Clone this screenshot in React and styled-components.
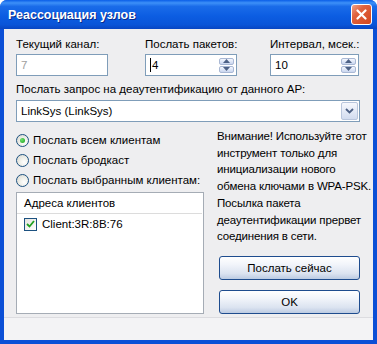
import styled, { createGlobalStyle } from "styled-components";

const Global = createGlobalStyle`
  html, body { margin: 0; padding: 0; background: #ffffff; }
  body { font-family: "Liberation Sans", Arial, sans-serif; font-size: 11.5px; color: #000; }
`;

const Window = styled.div`
  width: 377px;
  height: 344px;
  display: flex;
  flex-direction: column;
  border-radius: 7px 7px 0 0;
  overflow: hidden;
  background: #0b4fd6;
`;

const TitleBar = styled.div`
  height: 29px;
  flex-shrink: 0;
  display: flex;
  align-items: center;
  justify-content: space-between;
  padding: 0 5px 0 8px;
  background: linear-gradient(#0a5ee8 0%, #3d90f8 10%, #1a6ce9 22%, #0c5de2 55%, #0a55d8 85%, #0846c2 100%);
`;

const Title = styled.span`
  color: #fff;
  font-weight: bold;
  font-size: 12.5px;
  text-shadow: 1px 1px 0 #0a2a8a;
`;

const CloseButton = styled.div`
  width: 19px;
  height: 19px;
  border: 1px solid #fff;
  border-radius: 3px;
  background: linear-gradient(135deg, #f0a38a 0%, #e0623e 35%, #d4471f 100%);
  display: flex;
  align-items: center;
  justify-content: center;
`;

const Frame = styled.div`
  flex: 1;
  display: flex;
  flex-direction: column;
  border: solid #0b4fd6;
  border-width: 0 4px 4px;
  background: #eeeef0;
`;

const Body = styled.div`
  flex: 1;
  display: flex;
  flex-direction: column;
  padding: 8px 13px 2px 12px;
`;

const Footer = styled.div`
  height: 22px;
  border-top: 1px solid #dcdce0;
  background: #f3f3f5;
`;

const TopRow = styled.div`
  display: grid;
  grid-template-columns: 129px 125px 1fr;
`;

const Field = styled.div`
  display: flex;
  flex-direction: column;
  gap: 3px;
`;

const Label = styled.div`
  line-height: 14px;
  white-space: nowrap;
`;

const TextBox = styled.div`
  width: ${p => p.$w}px;
  height: 22px;
  box-sizing: border-box;
  border: 1px solid #7f9db9;
  background: #fff;
  display: flex;
  align-items: center;
  padding: 0 1px 0 4px;
  color: ${p => (p.$disabled ? "#a0a0a0" : "#000")};
`;

const Value = styled.span`
  flex: 1;
  display: flex;
  align-items: center;
`;

const Caret = styled.span`
  width: 1px;
  height: 14px;
  background: #000;
  margin-right: 1px;
`;

const Spinner = styled.div`
  display: flex;
  flex-direction: column;
  gap: 1px;
  margin-right: 1px;
`;

const SpinButton = styled.div`
  width: 15px;
  height: 7px;
  box-sizing: border-box;
  border: 1px solid #a9b8d4;
  border-radius: 2px;
  background: linear-gradient(#f4f7fe, #c9d6ef);
  display: flex;
  align-items: center;
  justify-content: center;
`;

const SectionLabel = styled(Label)`
  margin-top: 6px;
`;

const Combo = styled.div`
  margin-top: 4px;
  height: 22px;
  box-sizing: border-box;
  border: 1px solid #7f9db9;
  background: #fff;
  display: flex;
  align-items: center;
  padding: 1px;
`;

const ComboText = styled.span`
  flex: 1;
  padding-left: 3px;
`;

const DropButton = styled.div`
  width: 17px;
  height: 18px;
  box-sizing: border-box;
  border: 1px solid #b9c6dc;
  border-radius: 2px;
  background: linear-gradient(#f6f8fd, #d2dcef);
  display: flex;
  align-items: center;
  justify-content: center;
`;

const Middle = styled.div`
  flex: 1;
  margin-top: 8px;
  display: grid;
  grid-template-columns: 188px 1fr;
  column-gap: 13px;
`;

const LeftCol = styled.div`
  display: flex;
  flex-direction: column;
`;

const RadioRow = styled.div`
  height: 20px;
  display: flex;
  align-items: center;
  gap: 4px;
  white-space: nowrap;
`;

const RadioCircle = styled.span`
  width: 13px;
  height: 13px;
  box-sizing: border-box;
  border-radius: 50%;
  border: 1px solid #1c5180;
  background: radial-gradient(circle at 65% 65%, #ffffff 0%, #f0f0ea 40%, #d4d4cc 100%);
  display: flex;
  align-items: center;
  justify-content: center;
`;

const RadioDot = styled.span`
  width: 5px;
  height: 5px;
  border-radius: 50%;
  background: radial-gradient(circle at 35% 35%, #6ee26e, #1a9e1a);
`;

const ListBox = styled.div`
  flex: 1;
  margin-top: 2px;
  margin-bottom: 1px;
  border: 1px solid #a5acb5;
  background: #fff;
  display: flex;
  flex-direction: column;
`;

const ListHeader = styled.div`
  height: 20px;
  display: flex;
  align-items: center;
  padding-left: 7px;
  border-bottom: 1px solid #dcdcdc;
  margin-right: 1px;
`;

const ListItem = styled.div`
  height: 18px;
  margin-top: 1px;
  display: flex;
  align-items: center;
  gap: 5px;
  padding-left: 7px;
`;

const CheckBox = styled.span`
  width: 13px;
  height: 13px;
  box-sizing: border-box;
  border: 1px solid #1c5180;
  background: linear-gradient(135deg, #e4e4df, #ffffff);
  display: flex;
  align-items: center;
  justify-content: center;
`;

const RightCol = styled.div`
  display: flex;
  flex-direction: column;
  margin-top: -2px;
`;

const Warning = styled.div`
  line-height: 16.7px;
  letter-spacing: -0.15px;
  white-space: nowrap;
`;

const Buttons = styled.div`
  margin-top: auto;
  margin-left: 2px;
  margin-bottom: 1px;
  display: flex;
  flex-direction: column;
  gap: 10px;
`;

const Button = styled.div`
  width: 141px;
  height: 24px;
  box-sizing: border-box;
  border: 1px solid #1e4c8e;
  border-radius: 3px;
  background: linear-gradient(#ffffff 0%, #f1f4fa 35%, #dbe3f0 75%, #bccbe2 100%);
  display: flex;
  align-items: center;
  justify-content: center;
`;

const Arrow = ({ down }) => (
  <svg width="7" height="4" viewBox="0 0 7 4">
    <path d={down ? "M0 0 L7 0 L3.5 4 Z" : "M0 4 L7 4 L3.5 0 Z"} fill="#4d6185" />
  </svg>
);

const Spin = () => (
  <Spinner>
    <SpinButton><Arrow /></SpinButton>
    <SpinButton><Arrow down /></SpinButton>
  </Spinner>
);

const Radio = ({ checked, children }) => (
  <RadioRow>
    <RadioCircle>{checked && <RadioDot />}</RadioCircle>
    {children}
  </RadioRow>
);

export default function App() {
  return (
    <>
      <Global />
      <Window>
        <TitleBar>
          <Title>Реассоциация узлов</Title>
          <CloseButton>
            <svg width="11" height="11" viewBox="0 0 11 11">
              <path d="M1.5 1.5 L9.5 9.5 M9.5 1.5 L1.5 9.5" stroke="#fff" strokeWidth="2.2" strokeLinecap="round" />
            </svg>
          </CloseButton>
        </TitleBar>
        <Frame>
          <Body>
            <TopRow>
              <Field>
                <Label>Текущий канал:</Label>
                <TextBox $w={92} $disabled><Value>7</Value></TextBox>
              </Field>
              <Field>
                <Label>Послать пакетов:</Label>
                <TextBox $w={92}><Value><Caret />4</Value><Spin /></TextBox>
              </Field>
              <Field>
                <Label>Интервал, мсек.:</Label>
                <TextBox $w={89}><Value>10</Value><Spin /></TextBox>
              </Field>
            </TopRow>
            <SectionLabel>Послать запрос на деаутентификацию от данного AP:</SectionLabel>
            <Combo>
              <ComboText>LinkSys (LinkSys)</ComboText>
              <DropButton>
                <svg width="9" height="6" viewBox="0 0 9 6">
                  <path d="M1 1 L4.5 4.5 L8 1" fill="none" stroke="#4d6185" strokeWidth="1.8" />
                </svg>
              </DropButton>
            </Combo>
            <Middle>
              <LeftCol>
                <Radio checked>Послать всем клиентам</Radio>
                <Radio>Послать бродкаст</Radio>
                <Radio>Послать выбранным клиентам:</Radio>
                <ListBox>
                  <ListHeader>Адреса клиентов</ListHeader>
                  <ListItem>
                    <CheckBox>
                      <svg width="9" height="8" viewBox="0 0 9 8">
                        <path d="M1 4 L3.5 6.5 L8 1" fill="none" stroke="#21a121" strokeWidth="1.8" />
                      </svg>
                    </CheckBox>
                    Client:3R:8B:76
                  </ListItem>
                </ListBox>
              </LeftCol>
              <RightCol>
                <Warning>
                  Внимание! Используйте этот<br />
                  инструмент только для<br />
                  инициализации нового<br />
                  обмена ключами в WPA-PSK.<br />
                  Посылка пакета<br />
                  деаутентификации прервет<br />
                  соединения в сети.
                </Warning>
                <Buttons>
                  <Button>Послать сейчас</Button>
                  <Button>OK</Button>
                </Buttons>
              </RightCol>
            </Middle>
          </Body>
          <Footer />
        </Frame>
      </Window>
    </>
  );
}
